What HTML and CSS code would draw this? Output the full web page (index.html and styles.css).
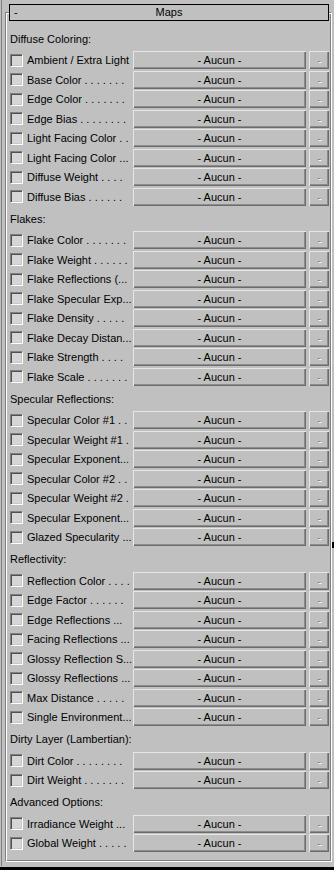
FILE: index.html
```html
<!DOCTYPE html>
<html>
<head>
<meta charset="utf-8">
<link rel="stylesheet" href="styles.css">
</head>
<body>
<div class="panel">
  <div class="rollout">
    <div class="rollout-head"><span class="toggle">-</span><span class="title">Maps</span></div>

    <div class="group">Diffuse Coloring:</div>
    <div class="row"><span class="cb"></span><span class="label">Ambient / Extra Light</span><button class="map">- Aucun -</button><button class="small">-</button></div>
    <div class="row"><span class="cb"></span><span class="label">Base Color . . . . . . .</span><button class="map">- Aucun -</button><button class="small">-</button></div>
    <div class="row"><span class="cb"></span><span class="label">Edge Color . . . . . . .</span><button class="map">- Aucun -</button><button class="small">-</button></div>
    <div class="row"><span class="cb"></span><span class="label">Edge Bias . . . . . . . .</span><button class="map">- Aucun -</button><button class="small">-</button></div>
    <div class="row"><span class="cb"></span><span class="label">Light Facing Color . .</span><button class="map">- Aucun -</button><button class="small">-</button></div>
    <div class="row"><span class="cb"></span><span class="label">Light Facing Color ...</span><button class="map">- Aucun -</button><button class="small">-</button></div>
    <div class="row"><span class="cb"></span><span class="label">Diffuse Weight . . . .</span><button class="map">- Aucun -</button><button class="small">-</button></div>
    <div class="row"><span class="cb"></span><span class="label">Diffuse Bias . . . . . .</span><button class="map">- Aucun -</button><button class="small">-</button></div>

    <div class="group">Flakes:</div>
    <div class="row"><span class="cb"></span><span class="label">Flake Color . . . . . . .</span><button class="map">- Aucun -</button><button class="small">-</button></div>
    <div class="row"><span class="cb"></span><span class="label">Flake Weight . . . . . .</span><button class="map">- Aucun -</button><button class="small">-</button></div>
    <div class="row"><span class="cb"></span><span class="label">Flake Reflections (...</span><button class="map">- Aucun -</button><button class="small">-</button></div>
    <div class="row"><span class="cb"></span><span class="label">Flake Specular Exp...</span><button class="map">- Aucun -</button><button class="small">-</button></div>
    <div class="row"><span class="cb"></span><span class="label">Flake Density . . . . .</span><button class="map">- Aucun -</button><button class="small">-</button></div>
    <div class="row"><span class="cb"></span><span class="label">Flake Decay Distan...</span><button class="map">- Aucun -</button><button class="small">-</button></div>
    <div class="row"><span class="cb"></span><span class="label">Flake Strength . . . .</span><button class="map">- Aucun -</button><button class="small">-</button></div>
    <div class="row"><span class="cb"></span><span class="label">Flake Scale . . . . . . .</span><button class="map">- Aucun -</button><button class="small">-</button></div>

    <div class="group">Specular Reflections:</div>
    <div class="row"><span class="cb"></span><span class="label">Specular Color #1 . .</span><button class="map">- Aucun -</button><button class="small">-</button></div>
    <div class="row"><span class="cb"></span><span class="label">Specular Weight #1 .</span><button class="map">- Aucun -</button><button class="small">-</button></div>
    <div class="row"><span class="cb"></span><span class="label">Specular Exponent...</span><button class="map">- Aucun -</button><button class="small">-</button></div>
    <div class="row"><span class="cb"></span><span class="label">Specular Color #2 . .</span><button class="map">- Aucun -</button><button class="small">-</button></div>
    <div class="row"><span class="cb"></span><span class="label">Specular Weight #2 .</span><button class="map">- Aucun -</button><button class="small">-</button></div>
    <div class="row"><span class="cb"></span><span class="label">Specular Exponent...</span><button class="map">- Aucun -</button><button class="small">-</button></div>
    <div class="row"><span class="cb"></span><span class="label">Glazed Specularity ...</span><button class="map">- Aucun -</button><button class="small">-</button></div>

    <div class="group">Reflectivity:</div>
    <div class="row"><span class="cb"></span><span class="label">Reflection Color . . . .</span><button class="map">- Aucun -</button><button class="small">-</button></div>
    <div class="row"><span class="cb"></span><span class="label">Edge Factor . . . . . .</span><button class="map">- Aucun -</button><button class="small">-</button></div>
    <div class="row"><span class="cb"></span><span class="label">Edge Reflections ...</span><button class="map">- Aucun -</button><button class="small">-</button></div>
    <div class="row"><span class="cb"></span><span class="label">Facing Reflections ...</span><button class="map">- Aucun -</button><button class="small">-</button></div>
    <div class="row"><span class="cb"></span><span class="label">Glossy Reflection S...</span><button class="map">- Aucun -</button><button class="small">-</button></div>
    <div class="row"><span class="cb"></span><span class="label">Glossy Reflections ...</span><button class="map">- Aucun -</button><button class="small">-</button></div>
    <div class="row"><span class="cb"></span><span class="label">Max Distance . . . . .</span><button class="map">- Aucun -</button><button class="small">-</button></div>
    <div class="row"><span class="cb"></span><span class="label">Single Environment...</span><button class="map">- Aucun -</button><button class="small">-</button></div>

    <div class="group">Dirty Layer (Lambertian):</div>
    <div class="row"><span class="cb"></span><span class="label">Dirt Color . . . . . . . .</span><button class="map">- Aucun -</button><button class="small">-</button></div>
    <div class="row"><span class="cb"></span><span class="label">Dirt Weight . . . . . . .</span><button class="map">- Aucun -</button><button class="small">-</button></div>

    <div class="group">Advanced Options:</div>
    <div class="row"><span class="cb"></span><span class="label">Irradiance Weight ...</span><button class="map">- Aucun -</button><button class="small">-</button></div>
    <div class="row"><span class="cb"></span><span class="label">Global Weight . . . . .</span><button class="map">- Aucun -</button><button class="small">-</button></div>
  </div>
  <div class="next-rollout"></div>
  <div class="scroll-mark"></div>
</div>
</body>
</html>
```

FILE: styles.css
```css
html, body {
  margin: 0;
  padding: 0;
  background: #c0c0c0;
}

.panel {
  position: relative;
  box-sizing: border-box;
  width: 334px;
  height: 870px;
  overflow: hidden;
  padding-left: 1px;
  background: #c0c0c0;
  font-family: "Liberation Sans", Arial, sans-serif;
  font-size: 11px;
  color: #000;
}

.panel::before {
  content: "";
  position: absolute;
  left: 1px;
  top: 0;
  bottom: 4px;
  width: 1px;
  background: #808080;
}

.rollout {
  box-sizing: border-box;
  height: 850px;
  margin: 12px 2px 0 4px;
  padding: 0 2px 0 4px;
  border: 1px solid;
  border-color: #808080 #ffffff #ffffff #808080;
  box-shadow: inset 1px 1px #ffffff, inset -1px -1px #808080;
}

.rollout-head {
  box-sizing: border-box;
  height: 17px;
  margin: -9px 0 5.5px -1px;
  border: 1px solid #000;
  background: #c0c0c0;
  display: flex;
  align-items: center;
  position: relative;
}

.toggle {
  position: absolute;
  left: 4px;
  top: 0;
  line-height: 15px;
}

.title {
  flex: 1;
  text-align: center;
  line-height: 15px;
}

.group {
  height: 24px;
  line-height: 24px;
  white-space: nowrap;
}

.row {
  display: flex;
  align-items: center;
  height: 19.5px;
}

.cb {
  box-sizing: border-box;
  width: 13px;
  height: 13px;
  margin-right: 4px;
  flex: none;
  background: #d6d6d6;
  border: 1px solid;
  border-color: #808080 #ffffff #ffffff #808080;
  box-shadow: inset 1px 1px #505050, inset -1px -1px #c8c8c8;
}

.label {
  width: 106px;
  flex: none;
  white-space: nowrap;
  overflow: hidden;
}

.map, .small {
  box-sizing: border-box;
  height: 18px;
  flex: none;
  padding: 0;
  border: none;
  background: #c0c0c0;
  font: inherit;
  color: #000;
  box-shadow: inset 1px 1px #e6e6e6, inset -1px -1px #6c6c6c, inset -2px -2px #8c8c8c;
}

.map {
  width: 173px;
  margin-right: 3px;
}

.small {
  width: 20px;
  color: #808080;
  text-shadow: 1px 1px #ffffff;
}

.next-rollout {
  height: 3px;
  margin: 5px 0 0 -1px;
  background: #000;
}

.scroll-mark {
  position: absolute;
  right: 0;
  top: 542px;
  width: 2px;
  height: 6px;
  background: #000;
}
```
